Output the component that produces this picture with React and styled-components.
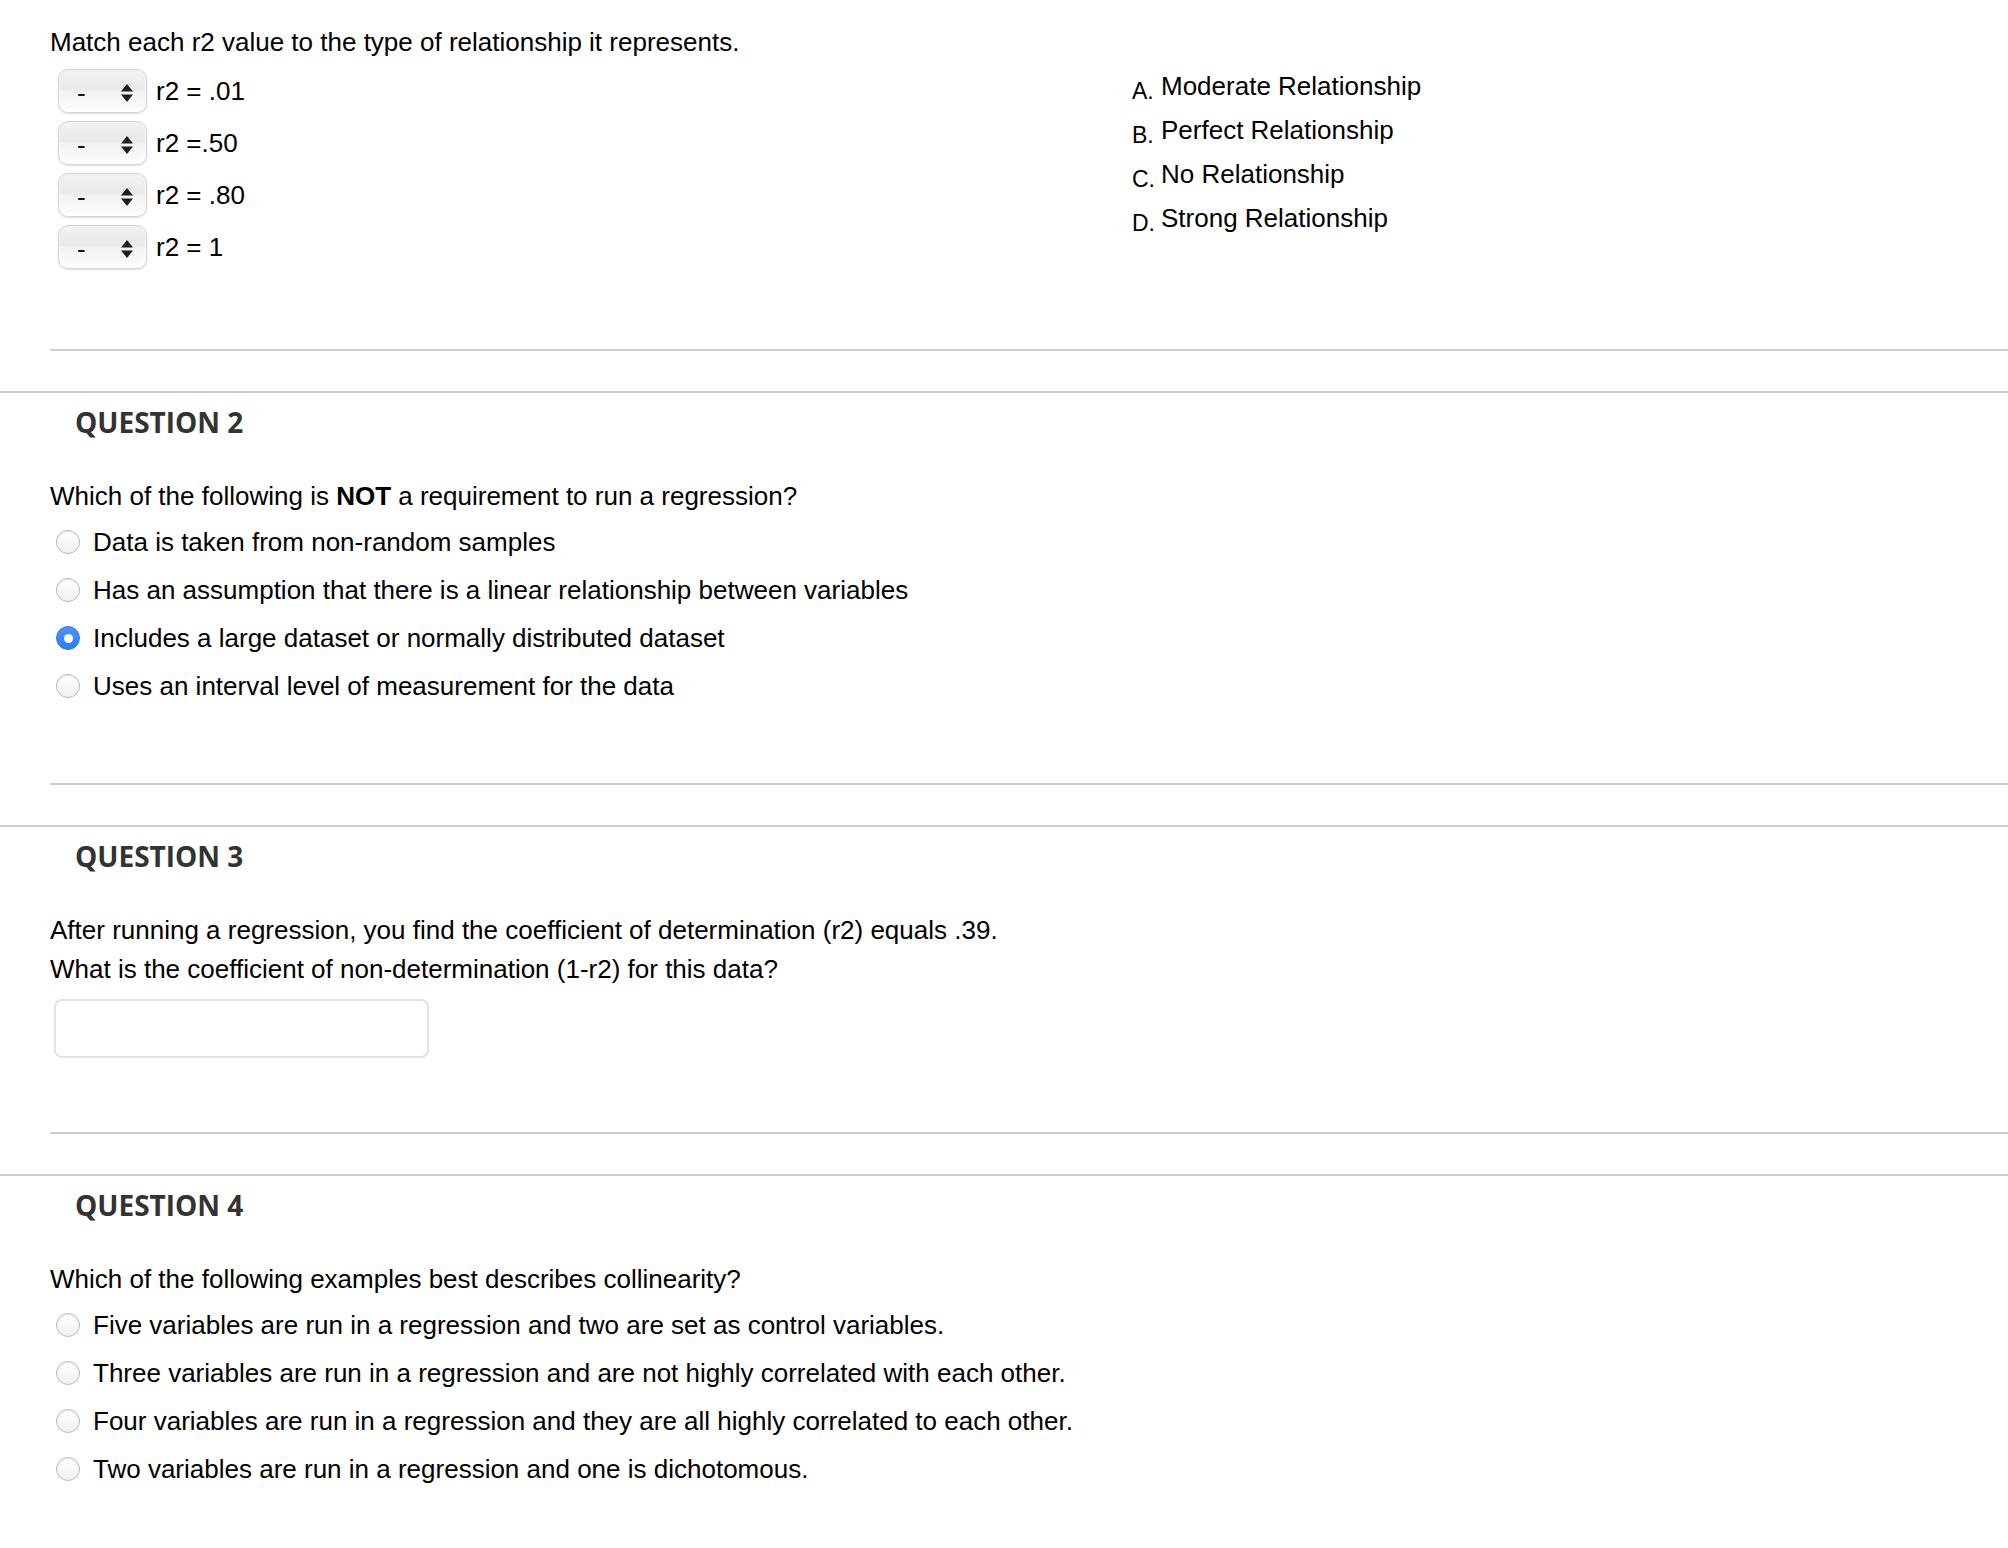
import React from 'react';
import styled, { createGlobalStyle } from 'styled-components';

const GlobalStyle = createGlobalStyle`
  html, body { margin: 0; padding: 0; background: #fff; }
  body {
    font-family: "Liberation Sans", Arial, Helvetica, sans-serif;
    color: #000;
  }
  * { box-sizing: border-box; }
`;

const Page = styled.div`
  width: 2008px;
  min-height: 1548px;
  background: #fff;
`;

const Block = styled.section`
  border-top: ${(p) => (p.$first ? 'none' : '2px solid #cdcdcd')};
  padding: ${(p) => (p.$first ? '23px' : '0')} 0 40px 50px;
`;

const Header = styled.h2`
  margin: 10px 0 0 25px;
  font-family: "Open Sans", "Liberation Sans", sans-serif;
  font-weight: 700;
  font-size: 28px;
  line-height: 38px;
  color: #333;
`;

const Prompt = styled.div`
  margin-top: ${(p) => p.$top || 0}px;
  font-size: 26px;
  line-height: 39px;
  strong { font-weight: 700; }
`;

const InnerRule = styled.div`
  height: 2px;
  background: #cdcdcd;
  margin-top: ${(p) => p.$gap}px;
`;

/* ---------- Question 1 (matching) ---------- */
const MatchGrid = styled.div`
  display: flex;
`;

const SelectColumn = styled.div`
  width: 1082px;
  padding-top: 7px;
  display: flex;
  flex-direction: column;
  gap: 8px;
`;

const SelectRow = styled.div`
  display: flex;
  align-items: center;
  height: 44px;
  padding-left: 8px;
  gap: 9px;
  font-size: 26px;
`;

const SelectBox = styled.div`
  width: 89px;
  height: 44px;
  border: 1px solid #d6d6d6;
  border-radius: 10px;
  background: linear-gradient(
    to bottom,
    #f1f1f1 0%,
    #eaeaea 46%,
    #f2f2f2 52%,
    #fcfcfc 100%
  );
  box-shadow: 0 1px 2px rgba(0, 0, 0, 0.14), inset 0 -3px 3px rgba(255, 255, 255, 0.95);
  display: flex;
  align-items: center;
  justify-content: space-between;
  padding: 0 13px 0 18px;
`;

const SelectValue = styled.span`
  font-size: 26px;
  line-height: 26px;
  padding-top: 4px;
  color: #111;
`;

const Arrows = styled.svg`
  width: 12px;
  height: 18px;
  margin-top: 4px;
  flex: none;
`;

const AnswerColumn = styled.div`
  padding-top: 2px;
`;

const AnswerRow = styled.div`
  height: 44px;
  font-size: 26px;
  line-height: 44px;
  white-space: nowrap;
`;

const AnswerLetter = styled.span`
  display: inline-block;
  width: 29px;
  font-size: 23px;
  line-height: 20px;
  vertical-align: -4px;
`;

/* ---------- Radio options ---------- */
const Options = styled.div`
  margin-top: 2px;
`;

const OptionRow = styled.label`
  display: flex;
  align-items: center;
  height: 48px;
  padding-left: 6px;
  gap: 13px;
  font-size: 26px;
  line-height: 48px;
  white-space: nowrap;
`;

const Radio = styled.span`
  width: 24px;
  height: 24px;
  flex: none;
  border-radius: 50%;
  display: flex;
  align-items: center;
  justify-content: center;
  border: 1px solid ${(p) => (p.$checked ? '#2f78ec' : '#b8b8b8')};
  background: ${(p) =>
    p.$checked
      ? 'linear-gradient(to bottom, #4a95f8, #2f7cf2)'
      : 'linear-gradient(to bottom, #ffffff, #f1f1f1)'};
  box-shadow: ${(p) =>
    p.$checked ? 'none' : 'inset 0 1px 1px rgba(0,0,0,0.07)'};
  &::after {
    content: '';
    width: 9px;
    height: 9px;
    border-radius: 50%;
    background: #fff;
    display: ${(p) => (p.$checked ? 'block' : 'none')};
  }
`;

const TextInput = styled.input`
  display: block;
  margin: 10px 0 0 4px;
  width: 375px;
  height: 59px;
  border: 2px solid #e3e3e3;
  border-radius: 8px;
  background: #fff;
  outline: none;
  font-size: 26px;
  font-family: inherit;
  padding: 0 12px;
`;

const ArrowIcon = () => (
  <Arrows viewBox="0 0 12 18" aria-hidden="true">
    <path d="M6 0 L12 7.5 L0 7.5 Z" fill="#1e1e1e" />
    <path d="M0 10.5 L12 10.5 L6 18 Z" fill="#1e1e1e" />
  </Arrows>
);

const q1Rows = ['r2 = .01', 'r2 =.50', 'r2 = .80', 'r2 = 1'];
const q1Answers = [
  ['A.', 'Moderate Relationship'],
  ['B.', 'Perfect Relationship'],
  ['C.', 'No Relationship'],
  ['D.', 'Strong Relationship'],
];

const q2Options = [
  'Data is taken from non-random samples',
  'Has an assumption that there is a linear relationship between variables',
  'Includes a large dataset or normally distributed dataset',
  'Uses an interval level of measurement for the data',
];

const q4Options = [
  'Five variables are run in a regression and two are set as control variables.',
  'Three variables are run in a regression and are not highly correlated with each other.',
  'Four variables are run in a regression and they are all highly correlated to each other.',
  'Two variables are run in a regression and one is dichotomous.',
];

const OptionList = ({ options, checked }) => (
  <Options>
    {options.map((o, i) => (
      <OptionRow key={o}>
        <Radio $checked={i === checked} />
        <span>{o}</span>
      </OptionRow>
    ))}
  </Options>
);

export default function App() {
  return (
    <Page>
      <GlobalStyle />
      <Block $first>
        <Prompt>Match each r2 value to the type of relationship it represents.</Prompt>
        <MatchGrid>
          <SelectColumn>
            {q1Rows.map((r) => (
              <SelectRow key={r}>
                <SelectBox>
                  <SelectValue>-</SelectValue>
                  <ArrowIcon />
                </SelectBox>
                <span>{r}</span>
              </SelectRow>
            ))}
          </SelectColumn>
          <AnswerColumn>
            {q1Answers.map(([l, t]) => (
              <AnswerRow key={l}>
                <AnswerLetter>{l}</AnswerLetter>
                {t}
              </AnswerRow>
            ))}
          </AnswerColumn>
        </MatchGrid>
        <InnerRule $gap={80} />
      </Block>

      <Block>
        <Header>QUESTION 2</Header>
        <Prompt $top={36}>
          Which of the following is <strong>NOT</strong> a requirement to run a regression?
        </Prompt>
        <OptionList options={q2Options} checked={2} />
        <InnerRule $gap={73} />
      </Block>

      <Block>
        <Header>QUESTION 3</Header>
        <Prompt $top={36}>
          After running a regression, you find the coefficient of determination (r2) equals .39.
          <br />
          What is the coefficient of non-determination (1-r2) for this data?
        </Prompt>
        <TextInput type="text" aria-label="answer" />
        <InnerRule $gap={74} />
      </Block>

      <Block>
        <Header>QUESTION 4</Header>
        <Prompt $top={36}>Which of the following examples best describes collinearity?</Prompt>
        <OptionList options={q4Options} checked={-1} />
      </Block>
    </Page>
  );
}
